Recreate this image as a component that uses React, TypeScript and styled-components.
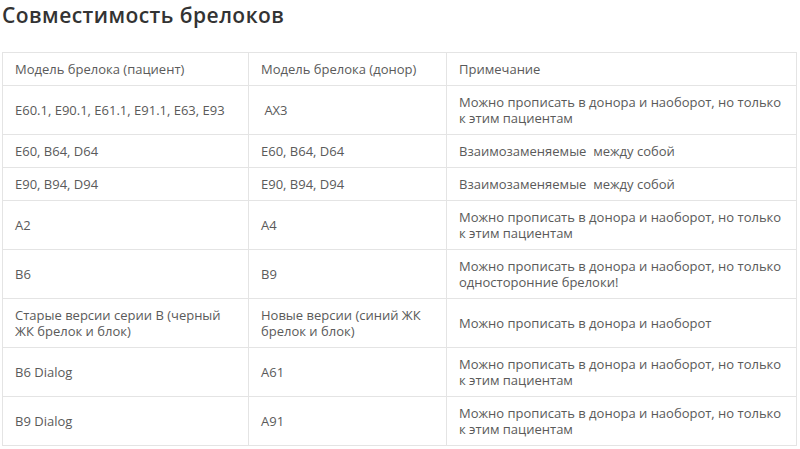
import React from 'react';
import styled, { createGlobalStyle } from 'styled-components';

interface Row {
    patient: string;
    donor: string;
    note: string;
}

const rows: Row[] = [
    {
        patient: 'E60.1, E90.1, E61.1, E91.1, E63, E93',
        donor: '\u00a0AX3',
        note: 'Можно прописать в донора и наоборот, но только к этим пациентам',
    },
    { patient: 'E60, B64, D64', donor: 'E60, B64, D64', note: 'Взаимозаменяемые\u00a0 между собой' },
    { patient: 'E90, B94, D94', donor: 'E90, B94, D94', note: 'Взаимозаменяемые\u00a0 между собой' },
    {
        patient: 'A2',
        donor: 'A4',
        note: 'Можно прописать в донора и наоборот, но только к этим пациентам',
    },
    {
        patient: 'B6',
        donor: 'B9',
        note: 'Можно прописать в донора и наоборот, но только односторонние брелоки!',
    },
    {
        patient: 'Старые версии серии В (черный ЖК брелок и блок)',
        donor: 'Новые версии (синий ЖК брелок и блок)',
        note: 'Можно прописать в донора и наоборот',
    },
    {
        patient: 'B6 Dialog',
        donor: 'A61',
        note: 'Можно прописать в донора и наоборот, но только к этим пациентам',
    },
    {
        patient: 'B9 Dialog',
        donor: 'A91',
        note: 'Можно прописать в донора и наоборот, но только к этим пациентам',
    },
];

const App = () => {
    return (
        <>
            <GlobalStyle />
            <Page>
                <Title>Совместимость брелоков</Title>
                <Table>
                    <colgroup>
                        <col style={{ width: 246 }} />
                        <col style={{ width: 198 }} />
                        <col />
                    </colgroup>
                    <thead>
                        <tr>
                            <Cell as="th">Модель брелока (пациент)</Cell>
                            <Cell as="th">Модель брелока (донор)</Cell>
                            <Cell as="th">Примечание</Cell>
                        </tr>
                    </thead>
                    <tbody>
                        {rows.map((r, i) => (
                            <tr key={i}>
                                <Cell>{r.patient}</Cell>
                                <Cell>{r.donor}</Cell>
                                <Cell>{r.note}</Cell>
                            </tr>
                        ))}
                    </tbody>
                </Table>
            </Page>
        </>
    );
};

const GlobalStyle = createGlobalStyle`
    body {
        margin: 0;
        background: #fff;
        font-family: 'Open Sans', 'Noto Sans', sans-serif;
    }
`;

const Page = styled.div`
    padding: 0 3px 0 2px;
`;

const Title = styled.h1`
    margin: 0;
    padding-top: 2px;
    height: 50px;
    font-size: 21px;
    line-height: 27px;
    font-weight: 600;
    color: #333;
    letter-spacing: 0.45px;
`;

const Table = styled.table`
    width: 100%;
    border-collapse: collapse;
    table-layout: fixed;
    border: 1px solid #e4e4e4;
`;

const Cell = styled.td`
    border: 1px solid #e4e4e4;
    padding: 8px 12px;
    font-size: 13px;
    line-height: 16px;
    font-weight: 400;
    color: #5a5a5a;
    text-align: left;
    vertical-align: middle;
`;

export default App;
